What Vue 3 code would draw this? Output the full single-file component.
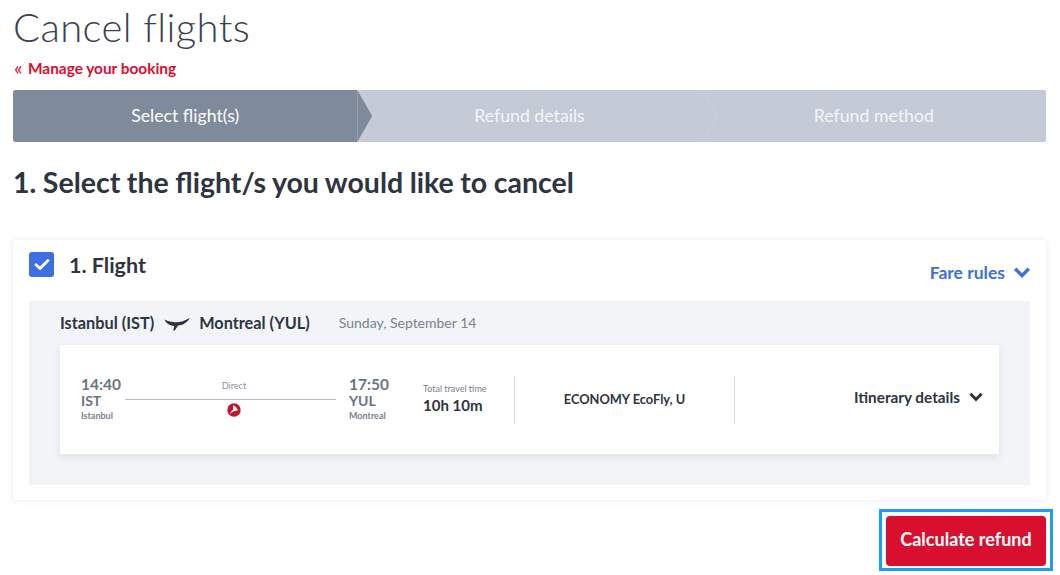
<template>
  <div class="page">
    <h1 class="title">Cancel flights</h1>
    <a class="back-link"><span class="back-icon">«</span>Manage your booking</a>

    <div class="steps">
      <div
        v-for="(step, index) in steps"
        :key="step"
        class="step"
        :class="{ active: index === 0, last: index === steps.length - 1 }"
      >
        {{ step }}
      </div>
    </div>

    <h2 class="heading">1. Select the flight/s you would like to cancel</h2>

    <section class="card">
      <div class="card-head">
        <div class="check">
          <svg width="16" height="13" viewBox="0 0 16 13">
            <path d="M2 6.800 6 10.600 14 2.400" fill="none" stroke="#fff" stroke-width="2.800" stroke-linecap="round" stroke-linejoin="round" />
          </svg>
        </div>
        <div class="flight-no">1. Flight</div>
        <a class="fare-rules">
          Fare rules
          <svg width="16" height="11" viewBox="0 0 16 11">
            <path d="M1.200 1.800 8 8.600 14.800 1.800" fill="none" stroke="#3e6fe0" stroke-width="3.400" />
          </svg>
        </a>
      </div>

      <div class="panel">
        <div class="route">
          <span>Istanbul (IST)</span>
          <svg class="plane" width="26" height="14" viewBox="0 0 26 14">
            <path d="M0.500 2.500C4 4.500 8 5.200 12 5.200 16.500 5.200 21 3.800 25.500 1 25 3.500 21 6.700 17.500 8L14 8.500 10.800 13.500H9.200L10.200 9C6 8.800 1.500 6 0.500 2.500Z" fill="#2e3440" />
          </svg>
          <span>Montreal (YUL)</span>
          <span class="date">Sunday, September 14</span>
        </div>

        <div class="row">
          <div class="point">
            <div class="time">14:40</div>
            <div class="code">IST</div>
            <div class="city">Istanbul</div>
          </div>
          <div class="track">
            <div class="direct">Direct</div>
            <div class="line"></div>
            <svg class="logo" width="14" height="14" viewBox="0 0 14 14">
              <circle cx="7" cy="7" r="6.700" fill="#c8102e" />
              <path d="M6.200 2.200C8.600 3.400 10.400 5.200 11 7.600 8.500 7.200 5.500 8.400 3 11 3.400 9.200 4.600 7.800 6.400 6.800 6 5.400 5.800 3.800 6.200 2.200Z" fill="#fff" />
            </svg>
          </div>
          <div class="point arrive">
            <div class="time">17:50</div>
            <div class="code">YUL</div>
            <div class="city">Montreal</div>
          </div>
          <div class="total">
            <div class="total-label">Total travel time</div>
            <div class="total-value">10h 10m</div>
          </div>
          <div class="cabin">ECONOMY EcoFly, U</div>
          <div class="itinerary">
            Itinerary details
            <svg width="14" height="10" viewBox="0 0 14 10">
              <path d="M1.400 1.800 7 7.400 12.600 1.800" fill="none" stroke="#2e3440" stroke-width="3" />
            </svg>
          </div>
        </div>
      </div>
    </section>

    <div class="actions">
      <div class="focus-ring">
        <button class="calc-btn">Calculate refund</button>
      </div>
    </div>
  </div>
</template>

<script setup>
const steps = ['Select flight(s)', 'Refund details', 'Refund method']
</script>

<style>
html,
body {
  margin: 0;
  background: #fff;
}
</style>

<style scoped>
.page {
  width: 1033px;
  height: 575px;
  overflow: hidden;
  padding: 0 14px 0 13px;
  font-family: Lato, "Noto Sans", sans-serif;
  color: #2e3440;
}

.title {
  margin: 0;
  height: 58px;
  font-size: 40px;
  line-height: 54px;
  font-weight: 300;
  color: #3a4150;
  letter-spacing: 0.4px;
}

.back-link {
  display: flex;
  align-items: center;
  height: 32px;
  padding-bottom: 12px;
  box-sizing: border-box;
  line-height: 20px;
  font-size: 15.400px;
  font-weight: 700;
  color: #d90f2f;
}

.back-icon {
  width: 14px;
  margin: -3px 0 0 1px;
  font-size: 20px;
  font-weight: 400;
}

.steps {
  display: flex;
  height: 52px;
  border-radius: 3px;
  background: #c4cad6;
}

.step {
  position: relative;
  flex: 1;
  display: flex;
  align-items: center;
  justify-content: center;
  padding-bottom: 2px;
  font-size: 17.700px;
  color: #f4f5f8;
  background: #c4cad6;
}

.step:first-child {
  border-radius: 3px 0 0 3px;
}

.step:last-child {
  border-radius: 0 3px 3px 0;
}

.step.active {
  background: #7f8a9b;
  color: #fff;
}

.step::before,
.step::after {
  content: "";
  position: absolute;
  top: 0;
  left: 100%;
  width: 15px;
  height: 100%;
  background: #c4cad6;
  clip-path: polygon(0 0, 100% 50%, 0 100%);
  z-index: 1;
}

.step::before {
  left: calc(100% + 1px);
  background: #cdd2dc;
}

.step.active::after {
  background: #7f8a9b;
}

.step.last::before,
.step.last::after {
  display: none;
}

.heading {
  margin: 0;
  box-sizing: border-box;
  padding-top: 22px;
  height: 74px;
  font-size: 28.500px;
  line-height: 36px;
  font-weight: 700;
  word-spacing: -0.4px;
  color: #2e3440;
}

.card {
  margin-top: 24px;
  height: 260px;
  box-sizing: border-box;
  padding: 12px 16px 15px;
  background: #fff;
  border-radius: 3px;
  box-shadow: 0 0 6px rgba(120, 140, 190, 0.2);
}

.card-head {
  display: flex;
  height: 49px;
}

.check {
  width: 25px;
  height: 25px;
  border-radius: 3px;
  background: #3e6fe0;
  display: flex;
  align-items: center;
  justify-content: center;
}

.flight-no {
  margin-left: 15px;
  font-size: 21.500px;
  line-height: 26px;
  font-weight: 700;
}

.fare-rules {
  margin-left: auto;
  display: flex;
  align-items: center;
  gap: 9px;
  height: 40px;
  font-size: 17.500px;
  font-weight: 700;
  color: #3e6fe0;
}

.panel {
  height: 184px;
  box-sizing: border-box;
  padding: 0 31px;
  background: #f2f4f8;
}

.route {
  display: flex;
  align-items: center;
  height: 44px;
  padding-bottom: 1px;
  box-sizing: border-box;
  font-size: 16.300px;
  font-weight: 700;
}

.plane {
  margin: 2px 9px 0 10px;
}

.date {
  margin-left: 29px;
  font-size: 14px;
  font-weight: 400;
  color: #7a8290;
}

.row {
  display: flex;
  align-items: center;
  height: 109px;
  padding-left: 21px;
  background: #fff;
  box-shadow: 0 3px 8px rgba(80, 90, 120, 0.12);
}

.point {
  width: 44px;
  padding-bottom: 3px;
  color: #6b7483;
}

.time {
  font-size: 15.500px;
  line-height: 18px;
  font-weight: 700;
}

.code {
  font-size: 14px;
  line-height: 15px;
  font-weight: 700;
}

.city {
  margin-top: 2px;
  font-size: 9px;
  line-height: 11px;
  font-weight: 700;
  color: #7a8290;
}

.track {
  width: 211px;
  display: flex;
  flex-direction: column;
  align-items: center;
}

.direct {
  height: 21px;
  margin-left: 7px;
  font-size: 9px;
  line-height: 15px;
  color: #8a92a0;
}

.line {
  align-self: stretch;
  height: 1px;
  background: #b9bcc4;
}

.logo {
  margin: 3px 0 4px 7px;
}

.point.arrive {
  width: 74px;
  margin-left: 13px;
}

.total {
  width: 91px;
  height: 48px;
  box-sizing: border-box;
  padding-top: 7px;
}

.total-label {
  font-size: 9px;
  line-height: 12px;
  color: #7a8290;
}

.total-value {
  font-size: 15px;
  line-height: 20px;
  font-weight: 700;
}

.cabin {
  width: 219px;
  height: 48px;
  line-height: 46px;
  text-align: center;
  font-size: 12.800px;
  font-weight: 700;
  border-left: 1px solid #d5d7dc;
  border-right: 1px solid #d5d7dc;
}

.itinerary {
  flex: 1;
  display: flex;
  align-items: center;
  justify-content: flex-end;
  gap: 9px;
  padding-right: 16px;
  padding-bottom: 5px;
  font-size: 15.300px;
  font-weight: 700;
}

.actions {
  display: flex;
  justify-content: flex-end;
  margin-top: 9px;
}

.focus-ring {
  display: flex;
  padding: 4px 4px 2px;
  margin-right: -7px;
  border: 3px solid #1e9bf5;
}

.calc-btn {
  width: 160px;
  height: 50px;
  padding: 0 0 4px;
  border: 0;
  border-radius: 4px;
  background: #d90f2f;
  color: #fff;
  font-family: inherit;
  font-size: 18px;
  font-weight: 700;
}
</style>
